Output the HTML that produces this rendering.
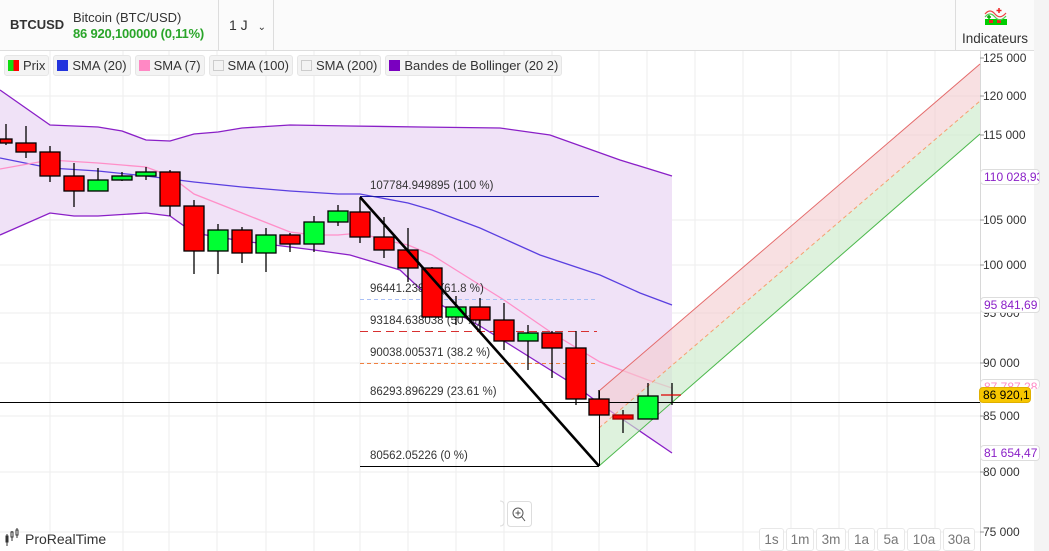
<!DOCTYPE html>
<html><head><meta charset="utf-8">
<style>
*{margin:0;padding:0;box-sizing:border-box}
body{width:1049px;height:551px;overflow:hidden;background:#fff;font-family:"Liberation Sans",sans-serif;position:relative;color:#333}
.hdr{position:absolute;left:0;top:0;width:1034px;height:51px;background:#fbfbfb;border-bottom:1px solid #ddd}
.abs{position:absolute;white-space:nowrap}
.legs{position:absolute;left:4px;top:55px;display:flex;gap:4px}
.leg{height:21px;background:#f3f3f3;border:1px solid #e6e6e6;border-radius:3px;font-size:13px;line-height:19px;padding:0 3px;color:#333;white-space:nowrap}
.sq{display:inline-block;width:11px;height:11px;vertical-align:-1px;margin-right:4px}
.btn{position:absolute;top:528px;height:23px;border:1px solid #e8e8e8;border-radius:3px;font-size:13.5px;color:#777;text-align:center;line-height:22px;background:#fff}
.pl{position:absolute;left:983px;font-size:12px;color:#333;white-space:nowrap}
.tag{position:absolute;left:980px;height:16px;font-size:12px;line-height:15px;padding-left:3px;border:1px solid #ddd;border-radius:4px;background:#fff;width:60px;overflow:hidden;color:#8a1fc7;white-space:nowrap}
</style></head><body>
<div class="hdr"></div>
<svg class="abs" style="left:0;top:0" width="1049" height="551">
<rect x="1034" y="0" width="15" height="551" fill="#f4f4f4"/>
<line x1="980.5" y1="51" x2="980.5" y2="551" stroke="#d8d8d8"/>
<g stroke="#eeeeee" stroke-width="1">
<line x1="0" y1="96" x2="980" y2="96"/><line x1="0" y1="135" x2="980" y2="135"/><line x1="0" y1="220" x2="980" y2="220"/><line x1="0" y1="265" x2="980" y2="265"/><line x1="0" y1="313" x2="980" y2="313"/><line x1="0" y1="363" x2="980" y2="363"/><line x1="0" y1="416" x2="980" y2="416"/><line x1="0" y1="472" x2="980" y2="472"/><line x1="0" y1="532" x2="980" y2="532"/>
<line x1="50" y1="51" x2="50" y2="551"/><line x1="123" y1="51" x2="123" y2="551"/><line x1="169" y1="51" x2="169" y2="551"/><line x1="217" y1="51" x2="217" y2="551"/><line x1="266" y1="51" x2="266" y2="551"/><line x1="314" y1="51" x2="314" y2="551"/><line x1="360" y1="51" x2="360" y2="551"/><line x1="408" y1="51" x2="408" y2="551"/><line x1="456" y1="51" x2="456" y2="551"/><line x1="504" y1="51" x2="504" y2="551"/><line x1="552" y1="51" x2="552" y2="551"/><line x1="599" y1="51" x2="599" y2="551"/><line x1="647" y1="51" x2="647" y2="551"/><line x1="695" y1="51" x2="695" y2="551"/><line x1="743" y1="51" x2="743" y2="551"/><line x1="791" y1="51" x2="791" y2="551"/><line x1="839" y1="51" x2="839" y2="551"/><line x1="887" y1="51" x2="887" y2="551"/><line x1="935" y1="51" x2="935" y2="551"/>
</g>
<polygon fill="#f0e2f7" points="0,90 50,125 98,127 122,131 146,140 170,141 194,134 218,132 242,128 290,125 350,126 420,127 500,128 550,135 620,160 672,176 672,453 600,404 576,386 528,356 480,326 432,300 400,270 350,255 314,250 290,247 242,241 194,233 170,216 146,213 98,216 74,216 50,213 0,235"/>
<polyline fill="none" stroke="#8a1fc7" stroke-width="1.3" points="0,90 50,125 98,127 122,131 146,140 170,141 194,134 218,132 242,128 290,125 350,126 420,127 500,128 550,135 620,160 672,176"/>
<polyline fill="none" stroke="#8a1fc7" stroke-width="1.3" points="0,235 50,213 74,216 98,216 146,213 170,216 194,233 242,241 290,247 314,250 350,255 400,270 432,300 480,326 528,356 576,386 600,404 672,453"/>
<polyline fill="none" stroke="#5a3fe0" stroke-width="1.3" points="0,158 50,168 98,171 146,176 194,182 242,187 290,191 338,194 360,194 408,203 432,210 480,228 540,255 600,275 640,293 672,305"/>
<polyline fill="none" stroke="#ff8fc8" stroke-width="1.3" points="0,169 50,160 98,163 146,167 170,176 194,194 242,213 290,232 314,235 338,235 360,233 384,240 408,245 432,255 456,270 504,300 552,333 600,362 648,380 672,388"/>
<polygon fill="#f4cccf" fill-opacity="0.6" points="599,391 980,64 980,101 599,428"/>
<polygon fill="#cdebcb" fill-opacity="0.65" points="599,428 980,101 980,134 599,466"/>
<line x1="599" y1="391" x2="980" y2="64" stroke="#e46a6a" stroke-width="1"/>
<line x1="599" y1="428" x2="980" y2="101" stroke="#f5a070" stroke-width="1" stroke-dasharray="4,3"/>
<line x1="599" y1="466" x2="980" y2="134" stroke="#4cb84c" stroke-width="1"/>
<line x1="360" y1="196.5" x2="599" y2="196.5" stroke="#1a1aa0"/>
<line x1="360" y1="299.5" x2="597" y2="299.5" stroke="#a9bff5" stroke-dasharray="4,3"/>
<line x1="360" y1="331.5" x2="597" y2="331.5" stroke="#d83030" stroke-dasharray="8,5"/>
<line x1="360" y1="363.5" x2="597" y2="363.5" stroke="#f08040" stroke-dasharray="4,3"/>
<line x1="360" y1="466.5" x2="599" y2="466.5" stroke="#000"/>
<line x1="599.5" y1="391" x2="599.5" y2="466" stroke="#000"/>
<line x1="0" y1="402.5" x2="980" y2="402.5" stroke="#000"/>
<g font-size="11.5" fill="#333">
<text x="370" y="189">107784.949895 (100 %)</text>
<text x="370" y="292">96441.23868 (61.8 %)</text>
<text x="370" y="324">93184.638038 (50 %)</text>
<text x="370" y="356">90038.005371 (38.2 %)</text>
<text x="370" y="395">86293.896229 (23.61 %)</text>
<text x="370" y="459">80562.05226 (0 %)</text>
</g>
<g stroke="#000" stroke-width="1.3">
<line x1="6" y1="124" x2="6" y2="145"/><rect x="0" y="139" width="12" height="4" fill="#f00"/>
<line x1="26" y1="126" x2="26" y2="158"/><rect x="16" y="143" width="20" height="9" fill="#f00"/>
<line x1="50" y1="146" x2="50" y2="182"/><rect x="40" y="152" width="20" height="24" fill="#f00"/>
<line x1="74" y1="163" x2="74" y2="207"/><rect x="64" y="176" width="20" height="15" fill="#f00"/>
<line x1="98" y1="168" x2="98" y2="191"/><rect x="88" y="180" width="20" height="11" fill="#0f3"/>
<line x1="122" y1="172" x2="122" y2="181"/><rect x="112" y="176" width="20" height="4" fill="#0f3"/>
<line x1="146" y1="167" x2="146" y2="180"/><rect x="136" y="172" width="20" height="4" fill="#0f3"/>
<line x1="170" y1="170" x2="170" y2="216"/><rect x="160" y="172" width="20" height="34" fill="#f00"/>
<line x1="194" y1="200" x2="194" y2="274"/><rect x="184" y="206" width="20" height="45" fill="#f00"/>
<line x1="218" y1="224" x2="218" y2="274"/><rect x="208" y="230" width="20" height="21" fill="#0f3"/>
<line x1="242" y1="227" x2="242" y2="263"/><rect x="232" y="230" width="20" height="23" fill="#f00"/>
<line x1="266" y1="228" x2="266" y2="272"/><rect x="256" y="235" width="20" height="18" fill="#0f3"/>
<line x1="290" y1="233" x2="290" y2="252"/><rect x="280" y="235" width="20" height="9" fill="#f00"/>
<line x1="314" y1="216" x2="314" y2="252"/><rect x="304" y="222" width="20" height="22" fill="#0f3"/>
<line x1="338" y1="205" x2="338" y2="226"/><rect x="328" y="211" width="20" height="11" fill="#0f3"/>
<line x1="360" y1="198" x2="360" y2="243"/><rect x="350" y="212" width="20" height="25" fill="#f00"/>
<line x1="384" y1="217" x2="384" y2="258"/><rect x="374" y="237" width="20" height="13" fill="#f00"/>
<line x1="408" y1="228" x2="408" y2="282"/><rect x="398" y="250" width="20" height="18" fill="#f00"/>
<line x1="432" y1="267" x2="432" y2="317"/><rect x="422" y="268" width="20" height="49" fill="#f00"/>
<line x1="456" y1="296" x2="456" y2="325"/><rect x="446" y="307" width="20" height="10" fill="#0f3"/>
<line x1="480" y1="298" x2="480" y2="333"/><rect x="470" y="307" width="20" height="13" fill="#f00"/>
<line x1="504" y1="303" x2="504" y2="350"/><rect x="494" y="320" width="20" height="21" fill="#f00"/>
<line x1="528" y1="325" x2="528" y2="370"/><rect x="518" y="333" width="20" height="8" fill="#0f3"/>
<line x1="552" y1="331" x2="552" y2="378"/><rect x="542" y="333" width="20" height="15" fill="#f00"/>
<line x1="576" y1="331" x2="576" y2="405"/><rect x="566" y="348" width="20" height="51" fill="#f00"/>
<line x1="599" y1="390" x2="599" y2="415"/><rect x="589" y="399" width="20" height="16" fill="#f00"/>
<line x1="623" y1="410" x2="623" y2="433"/><rect x="613" y="415" width="20" height="4" fill="#f00" stroke="#900"/>
<line x1="648" y1="383" x2="648" y2="419"/><rect x="638" y="396" width="20" height="23" fill="#0f3"/>
<line x1="672" y1="383" x2="672" y2="405"/><line x1="661" y1="395" x2="681" y2="395" stroke="#d00"/>
</g>
<line x1="360" y1="197" x2="599" y2="466" stroke="#000" stroke-width="2.6"/>
<path d="M500 501 Q504 501 504 505 L504 522 Q504 526 500 526" fill="none" stroke="#ddd"/>
<rect x="507.5" y="501.5" width="24" height="25" rx="3" fill="#fff" stroke="#ddd"/>
<circle cx="518" cy="513" r="5" fill="none" stroke="#555"/><line x1="521.5" y1="516.5" x2="525" y2="521" stroke="#555"/>
<line x1="515.5" y1="513" x2="520.5" y2="513" stroke="#555"/><line x1="518" y1="510.5" x2="518" y2="515.5" stroke="#555"/>
<g stroke="#333"><line x1="7" y1="534" x2="7" y2="546"/><rect x="6" y="536" width="2" height="6" fill="#333"/><line x1="12" y1="531" x2="12" y2="541"/><rect x="11" y="532" width="2" height="5" fill="#fff"/><line x1="17" y1="528" x2="17" y2="538"/><rect x="16" y="530" width="2" height="5" fill="#fff"/></g>
<g stroke="#999"><line x1="980" y1="58" x2="984" y2="58"/><line x1="980" y1="96" x2="984" y2="96"/><line x1="980" y1="135" x2="984" y2="135"/><line x1="980" y1="220" x2="984" y2="220"/><line x1="980" y1="265" x2="984" y2="265"/><line x1="980" y1="363" x2="984" y2="363"/><line x1="980" y1="416" x2="984" y2="416"/><line x1="980" y1="472" x2="984" y2="472"/><line x1="980" y1="532" x2="984" y2="532"/></g>
<line x1="218.5" y1="0" x2="218.5" y2="51" stroke="#ddd"/>
<line x1="273.5" y1="0" x2="273.5" y2="51" stroke="#ddd"/>
<line x1="955.5" y1="0" x2="955.5" y2="51" stroke="#ddd"/>
<g transform="translate(985,8)">
<rect x="0" y="11" width="22" height="6" fill="#0c0"/><rect x="4" y="12" width="4" height="3" fill="#e22"/><rect x="12" y="12" width="4" height="3" fill="#e22"/>
<path d="M0 6 Q5 0 10 6 T21 5" fill="none" stroke="#e44" stroke-width="1.2"/>
<path d="M0 9 Q5 3 10 9 T21 8" fill="none" stroke="#5c5" stroke-width="1.2"/>
<line x1="14" y1="0" x2="14" y2="5" stroke="#e22" stroke-width="1.5"/><line x1="11.5" y1="2.5" x2="16.5" y2="2.5" stroke="#e22" stroke-width="1.5"/>
<line x1="4" y1="7" x2="4" y2="11" stroke="#0a0" stroke-width="1.5"/><line x1="2" y1="9" x2="6" y2="9" stroke="#0a0" stroke-width="1.5"/>
</g>
</svg>
<div class="abs" style="left:10px;top:17px;font-size:13px;font-weight:bold;color:#333">BTCUSD</div>
<div class="abs" style="left:73px;top:10px;font-size:13px;color:#333">Bitcoin (BTC/USD)</div>
<div class="abs" style="left:73px;top:26px;font-size:13px;font-weight:bold;color:#2aa52a;letter-spacing:-0.2px">86 920,100000 (0,11%)</div>
<div class="abs" style="left:229px;top:17px;font-size:14px;color:#333">1 J <span style="font-size:10px;margin-left:6px">&#8964;</span></div>
<div class="abs" style="left:962px;top:31px;font-size:13.5px;color:#333">Indicateurs</div>
<div class="legs">
<div class="leg"><span class="sq" style="background:linear-gradient(90deg,#1d1 50%,#f00 50%)"></span>Prix</div>
<div class="leg"><span class="sq" style="background:#2233dd"></span>SMA (20)</div>
<div class="leg"><span class="sq" style="background:#ff88c4"></span>SMA (7)</div>
<div class="leg"><span class="sq" style="background:#f3f3f3;border:1px solid #ccc"></span>SMA (100)</div>
<div class="leg"><span class="sq" style="background:#f3f3f3;border:1px solid #ccc"></span>SMA (200)</div>
<div class="leg"><span class="sq" style="background:#7a00c0"></span>Bandes de Bollinger (20 2)</div>
</div>
<div class="pl" style="top:51px">125 000</div>
<div class="pl" style="top:89px">120 000</div>
<div class="pl" style="top:128px">115 000</div>
<div class="pl" style="top:213px">105 000</div>
<div class="pl" style="top:258px">100 000</div>
<div class="pl" style="top:306px">95 000</div>
<div class="pl" style="top:356px">90 000</div>
<div class="pl" style="top:409px">85 000</div>
<div class="pl" style="top:465px">80 000</div>
<div class="pl" style="top:525px">75 000</div>
<div class="tag" style="top:169px">110 028,93</div>
<div class="tag" style="top:297px">95 841,69</div>
<div class="tag" style="top:379px;color:#ff88c4;height:10px;border-bottom:none">87 787,28</div>
<div class="tag" style="top:387px;left:979px;background:#f7c600;border-color:#e0b000;color:#000;width:52px">86 920,1</div>
<div class="tag" style="top:445px">81 654,47</div>
<div class="abs" style="left:25px;top:531px;font-size:14px;color:#333">ProRealTime</div>
<div class="btn" style="left:759px;width:25px">1s</div>
<div class="btn" style="left:786px;width:28px">1m</div>
<div class="btn" style="left:816px;width:30px">3m</div>
<div class="btn" style="left:848px;width:27px">1a</div>
<div class="btn" style="left:877px;width:28px">5a</div>
<div class="btn" style="left:907px;width:34px">10a</div>
<div class="btn" style="left:943px;width:32px">30a</div>
</body></html>
